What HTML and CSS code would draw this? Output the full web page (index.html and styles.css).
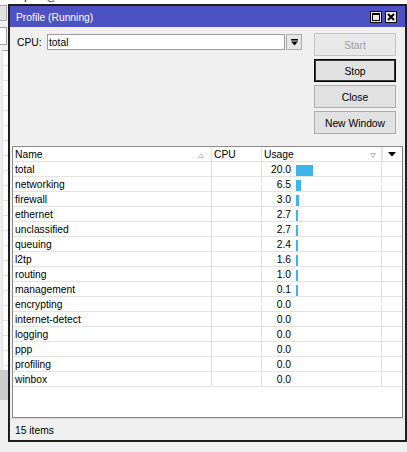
FILE: index.html
```html
<!DOCTYPE html>
<html lang="en">
<head>
    <meta charset="UTF-8">
    <title>Profile (Running)</title>
    <link rel="stylesheet" href="styles.css">
</head>
<body>
<div class="desktop">

    <!-- window behind, only its edges show -->
    <div class="bg-top">
        <span class="bg-name">rdpdcs@hdwireless</span>
        <span class="bg-num">52428800</span>
        <span class="bg-num">52428800</span>
    </div>
    <div class="bg-side">
        <div class="bg-btn"></div>
        <div class="bg-input"></div>
        <div class="bg-list"></div>
        <div class="bg-scroll"></div>
    </div>

    <div class="window">
        <div class="titlebar">
            <span class="title">Profile (Running)</span>
            <div class="title-buttons">
                <span class="tbtn">
                    <svg width="8" height="8" viewBox="0 0 8 8"><rect x="0.5" y="0.5" width="7" height="7" fill="none" stroke="#000"/><rect x="0" y="0" width="8" height="2" fill="#000"/></svg>
                </span>
                <span class="tbtn">
                    <svg width="8" height="8" viewBox="0 0 8 8"><path d="M1 1 L7 7 M7 1 L1 7" stroke="#000" stroke-width="2"/></svg>
                </span>
            </div>
        </div>

        <div class="content">
            <div class="top">
                <label class="cpu-label">CPU:</label>
                <div class="combo">
                    <span class="combo-text">total</span>
                    <span class="combo-btn">
                        <svg width="7" height="7" viewBox="0 0 7 7"><rect x="0" y="0" width="7" height="1.5" fill="#000"/><polygon points="0,2.5 7,2.5 3.5,6.5" fill="#000"/></svg>
                    </span>
                </div>
                <div class="actions">
                    <button class="btn" disabled>Start</button>
                    <button class="btn btn-default">Stop</button>
                    <button class="btn">Close</button>
                    <button class="btn">New Window</button>
                </div>
            </div>

            <div class="list">
                <div class="row head">
                    <div class="cell name">Name
                        <svg class="sort" width="6" height="5" viewBox="0 0 6 5"><polygon points="3,0.5 5.5,4.5 0.5,4.5" fill="none" stroke="#c4c4c4"/></svg>
                    </div>
                    <div class="cell">CPU</div>
                    <div class="cell usage-head">Usage
                        <svg class="sort" width="6" height="5" viewBox="0 0 6 5"><polygon points="0.5,0.5 5.5,0.5 3,4.5" fill="none" stroke="#b8b8b8"/></svg>
                    </div>
                    <div class="cell menu">
                        <svg width="8" height="5" viewBox="0 0 8 5"><polygon points="0,0 8,0 4,4.5" fill="#000"/></svg>
                    </div>
                </div>

                <div class="row"><div class="cell name">total</div><div class="cell"></div><div class="cell usage"><span class="val">20.0</span><span class="bar" style="width:17px"></span></div><div class="cell"></div></div>
                <div class="row"><div class="cell name">networking</div><div class="cell"></div><div class="cell usage"><span class="val">6.5</span><span class="bar" style="width:5px"></span></div><div class="cell"></div></div>
                <div class="row"><div class="cell name">firewall</div><div class="cell"></div><div class="cell usage"><span class="val">3.0</span><span class="bar" style="width:3px"></span></div><div class="cell"></div></div>
                <div class="row"><div class="cell name">ethernet</div><div class="cell"></div><div class="cell usage"><span class="val">2.7</span><span class="bar" style="width:2px"></span></div><div class="cell"></div></div>
                <div class="row"><div class="cell name">unclassified</div><div class="cell"></div><div class="cell usage"><span class="val">2.7</span><span class="bar" style="width:2px"></span></div><div class="cell"></div></div>
                <div class="row"><div class="cell name">queuing</div><div class="cell"></div><div class="cell usage"><span class="val">2.4</span><span class="bar" style="width:2px"></span></div><div class="cell"></div></div>
                <div class="row"><div class="cell name">l2tp</div><div class="cell"></div><div class="cell usage"><span class="val">1.6</span><span class="bar" style="width:2px"></span></div><div class="cell"></div></div>
                <div class="row"><div class="cell name">routing</div><div class="cell"></div><div class="cell usage"><span class="val">1.0</span><span class="bar" style="width:2px"></span></div><div class="cell"></div></div>
                <div class="row"><div class="cell name">management</div><div class="cell"></div><div class="cell usage"><span class="val">0.1</span><span class="bar" style="width:2px"></span></div><div class="cell"></div></div>
                <div class="row"><div class="cell name">encrypting</div><div class="cell"></div><div class="cell usage"><span class="val">0.0</span></div><div class="cell"></div></div>
                <div class="row"><div class="cell name">internet-detect</div><div class="cell"></div><div class="cell usage"><span class="val">0.0</span></div><div class="cell"></div></div>
                <div class="row"><div class="cell name">logging</div><div class="cell"></div><div class="cell usage"><span class="val">0.0</span></div><div class="cell"></div></div>
                <div class="row"><div class="cell name">ppp</div><div class="cell"></div><div class="cell usage"><span class="val">0.0</span></div><div class="cell"></div></div>
                <div class="row"><div class="cell name">profiling</div><div class="cell"></div><div class="cell usage"><span class="val">0.0</span></div><div class="cell"></div></div>
                <div class="row"><div class="cell name">winbox</div><div class="cell"></div><div class="cell usage"><span class="val">0.0</span></div><div class="cell"></div></div>
            </div>

            <div class="status">15 items</div>
        </div>
    </div>

</div>
</body>
</html>
```

FILE: styles.css
```css
* {
    box-sizing: border-box;
}

body {
    margin: 0;
    background-color: #f0f0f0;
    font-family: "Liberation Sans", Arial, sans-serif;
    font-size: 10.3px;
    color: #000;
}

.desktop {
    position: relative;
    width: 407px;
    height: 452px;
    overflow: hidden;
}

/* background window */
.bg-top {
    position: absolute;
    left: 0;
    top: -11px;
    width: 407px;
    height: 15px;
    background-color: #fff;
    line-height: 15px;
    display: flex;
}

.bg-name {
    margin-left: 15px;
    width: 152px;
}

.bg-num {
    width: 115px;
}

.bg-side {
    position: absolute;
    left: 0;
    top: 0;
    width: 8px;
    height: 452px;
    display: flex;
    flex-direction: column;
}

.bg-btn {
    margin-top: 5px;
    height: 16px;
    border: 1px solid #adadad;
    border-left: none;
    background-color: #e1e1e1;
    width: 7px;
}

.bg-input {
    margin-top: 6px;
    height: 18px;
    width: 7px;
    border: 1px solid #a0a0a0;
    border-left: none;
    background-color: #fff;
}

.bg-list {
    margin-top: 5px;
    height: 320px;
    border-top: 1px solid #a0a0a0;
    border-left: 1px solid #e3e3e3;
    margin-left: 2px;
    background-color: #fff;
    background-image: repeating-linear-gradient(to bottom, #fff 0, #fff 14px, #e3e3e3 14px, #e3e3e3 15px);
}

.bg-scroll {
    height: 30px;
    background-color: #cdcdcd;
}

/* profile window */
.window {
    position: absolute;
    left: 8px;
    top: 4px;
    width: 399px;
    height: 438px;
    border: 2px solid #1e1e1e;
    background-color: #f0f0f0;
    display: flex;
    flex-direction: column;
}

.titlebar {
    height: 21px;
    background-color: #4c52c4;
    display: flex;
    align-items: center;
    padding: 0 8px 0 6px;
}

.title {
    color: #fff;
    flex: 1;
    padding-top: 1px;
}

.title-buttons {
    display: flex;
    gap: 3px;
}

.tbtn {
    width: 12px;
    height: 12px;
    border: 1px solid #000;
    background-color: #ececec;
    display: flex;
    align-items: center;
    justify-content: center;
}

.content {
    flex: 1;
    display: flex;
    flex-direction: column;
}

.top {
    height: 119px;
    display: flex;
    align-items: flex-start;
    padding: 6px 0 0 7px;
}

.cpu-label {
    width: 30px;
    margin-top: 1px;
    line-height: 17px;
}

.combo {
    width: 255px;
    height: 16px;
    margin-top: 1px;
    display: flex;
}

.combo-text {
    flex: 1;
    border: 1px solid #9c9c9c;
    background-color: #fff;
    line-height: 15px;
    padding-left: 1px;
}

.combo-btn {
    width: 16px;
    margin-left: 1px;
    border: 1px solid #adadad;
    background-color: #e6e6e6;
    display: flex;
    align-items: center;
    justify-content: center;
}

.actions {
    margin-left: 12px;
    width: 82px;
    display: flex;
    flex-direction: column;
    gap: 3px;
}

.btn {
    height: 23px;
    font-family: inherit;
    font-size: 10.3px;
    color: #000;
    background-color: #e1e1e1;
    border: 1px solid #adadad;
    padding: 1px 0 0;
}

.btn:disabled {
    color: #a0a0a0;
    background-color: #e8e8e8;
    border-color: #c4c4c4;
}

.btn-default {
    border: 1px solid #000;
    box-shadow: inset 0 0 0 1px #3a3a3a;
}

/* list */
.list {
    height: 272px;
    margin: 0 2px;
    border: 1px solid #8c8c8c;
    border-right-color: #7a7a7a;
    background-color: #fff;
}

.row {
    display: grid;
    grid-template-columns: 199px 50px 120px 19px;
    height: 15px;
    border-bottom: 1px solid #e3e3e3;
}

.cell {
    border-right: 1px solid #e3e3e3;
    line-height: 14px;
    padding: 1px 0 0 2px;
    white-space: nowrap;
}

.cell:last-child {
    border-right: none;
}

.head .cell {
    display: flex;
    align-items: center;
    justify-content: space-between;
}

.head .name {
    padding-right: 7px;
}

.head .usage-head {
    padding-right: 5px;
}

.head .menu {
    justify-content: center;
    border-left: 1px solid #e3e3e3;
    padding: 0;
}

.usage {
    display: flex;
    align-items: center;
    padding-left: 0;
}

.val {
    width: 29px;
    text-align: right;
}

.bar {
    height: 11px;
    margin-left: 5px;
    background-color: #3db5e8;
}

.status {
    height: 22px;
    padding: 1px 0 0 5px;
    display: flex;
    align-items: center;
    border-top: 1px solid #d6d6d6;
}
```
